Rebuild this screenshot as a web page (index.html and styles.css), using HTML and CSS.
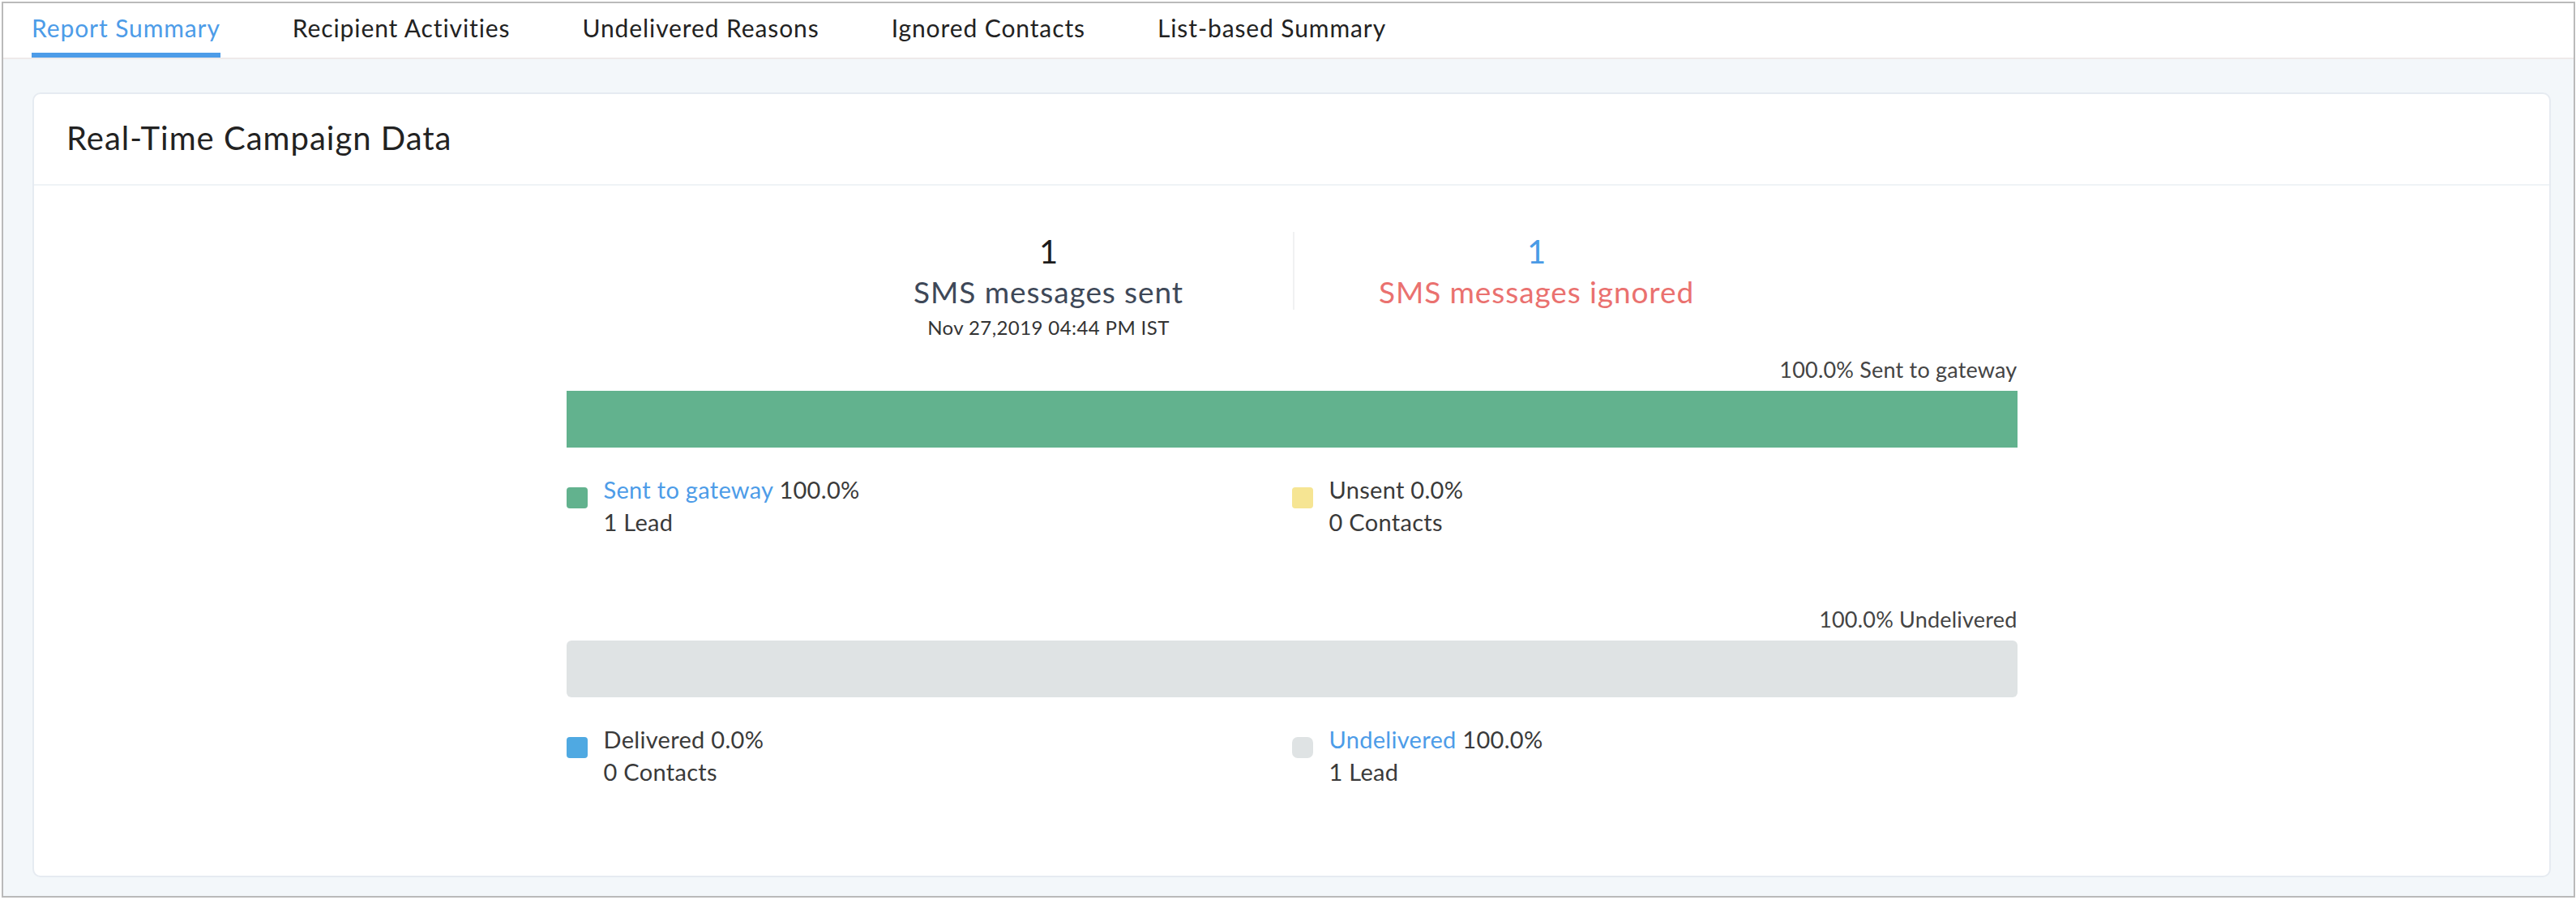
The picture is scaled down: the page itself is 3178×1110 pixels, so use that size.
FILE: index.html
```html
<!DOCTYPE html>
<html lang="en">
<head>
<meta charset="utf-8">
<title>Report Summary</title>
<link rel="stylesheet" href="styles.css">
</head>
<body>
<div class="frame">
  <nav class="tabs">
    <div class="tab active">Report Summary</div>
    <div class="tab">Recipient Activities</div>
    <div class="tab">Undelivered Reasons</div>
    <div class="tab">Ignored Contacts</div>
    <div class="tab">List-based Summary</div>
  </nav>
  <main class="content">
    <section class="card">
      <header class="card-head">
        <h2 class="card-title">Real-Time Campaign Data</h2>
      </header>
      <div class="card-body">
        <div class="stats">
          <div class="stat">
            <div class="stat-num">1</div>
            <div class="stat-label">SMS messages sent</div>
            <div class="stat-date">Nov 27,2019 04:44 PM IST</div>
          </div>
          <div class="stat stat-ignored">
            <div class="stat-num">1</div>
            <div class="stat-label">SMS messages ignored</div>
          </div>
        </div>

        <div class="meter">
          <div class="meter-caption">100.0% Sent to gateway</div>
          <div class="meter-track">
            <div class="meter-fill fill-green" style="width:100%"></div>
          </div>
          <div class="legend">
            <div class="legend-item">
              <span class="swatch sw-green"></span>
              <div class="legend-text">
                <div><span class="link">Sent to gateway</span> 100.0%</div>
                <div>1 Lead</div>
              </div>
            </div>
            <div class="legend-item">
              <span class="swatch sw-yellow"></span>
              <div class="legend-text">
                <div>Unsent 0.0%</div>
                <div>0 Contacts</div>
              </div>
            </div>
          </div>
        </div>

        <div class="meter">
          <div class="meter-caption">100.0% Undelivered</div>
          <div class="meter-track track-round">
            <div class="meter-fill fill-gray" style="width:100%"></div>
          </div>
          <div class="legend">
            <div class="legend-item">
              <span class="swatch sw-blue"></span>
              <div class="legend-text">
                <div>Delivered 0.0%</div>
                <div>0 Contacts</div>
              </div>
            </div>
            <div class="legend-item">
              <span class="swatch sw-gray"></span>
              <div class="legend-text">
                <div><span class="link">Undelivered</span> 100.0%</div>
                <div>1 Lead</div>
              </div>
            </div>
          </div>
        </div>
      </div>
    </section>
  </main>
</div>
</body>
</html>
```
FILE: styles.css
```css
html, body {
  margin: 0;
  padding: 0;
  background: #ffffff;
}

body {
  font-family: "Lato", "Liberation Sans", sans-serif;
  color: #222222;
}

.frame {
  margin: 2px 1px 3px 2px;
  height: 1105px;
  box-sizing: border-box;
  border: 2px solid #bababa;
  display: flex;
  flex-direction: column;
}

/* Tabs */
.tabs {
  display: flex;
  gap: 89px;
  padding-left: 35px;
  background: #ffffff;
  border-bottom: 2px solid #eeeaea;
}

.tab {
  font-size: 30px;
  line-height: 34px;
  letter-spacing: 0.9px;
  padding: 13px 0 14px;
  border-bottom: 6px solid transparent;
  color: #222222;
  white-space: nowrap;
}

.tab.active {
  color: #4d9ce8;
  border-bottom-color: #4d9ce8;
}

/* Content */
.content {
  flex: 1;
  background: #f3f7fa;
  padding: 41px 28px 23px 36px;
  display: flex;
  flex-direction: column;
}

.card {
  flex: 1;
  background: #ffffff;
  border: 2px solid #e6ebf1;
  border-radius: 10px;
  display: flex;
  flex-direction: column;
}

.card-head {
  padding: 30px 40px 33px;
  border-bottom: 2px solid #eff3f6;
}

.card-title {
  margin: 0;
  font-weight: 400;
  font-size: 40px;
  line-height: 48px;
  letter-spacing: 1px;
  color: #222222;
}

.card-body {
  display: flex;
  flex-direction: column;
  align-items: center;
  padding-top: 57px;
}

/* Stats */
.stats {
  display: flex;
  align-items: flex-start;
}

.stat {
  width: 602px;
  text-align: center;
}

.stat-ignored {
  width: 598px;
  border-left: 2px solid #f0f1f2;
}

.stat-num {
  font-size: 40px;
  line-height: 48px;
  color: #1d1d1d;
}

.stat-ignored .stat-num {
  color: #4a9be6;
}

.stat-label {
  margin-top: 4px;
  font-size: 37px;
  line-height: 44px;
  letter-spacing: 0.9px;
  color: #3e4858;
}

.stat-ignored .stat-label {
  color: #ea716f;
}

.stat-date {
  margin-top: 7px;
  font-size: 24px;
  line-height: 30px;
  letter-spacing: 0.4px;
  color: #333333;
}

/* Meters */
.meter {
  width: 1790px;
  margin-top: 21px;
}

.meter + .meter {
  margin-top: 84px;
}

.meter-caption {
  text-align: right;
  font-size: 27px;
  line-height: 32px;
  letter-spacing: 0.2px;
  color: #444444;
}

.meter-track {
  margin-top: 10px;
  height: 70px;
  background: #dfe3e4;
  overflow: hidden;
}

.track-round {
  border-radius: 6px;
}

.meter-fill {
  height: 100%;
}

.fill-green {
  background: #62b28e;
}

.fill-gray {
  background: #dfe3e4;
}

.legend {
  display: grid;
  grid-template-columns: 1fr 1fr;
  margin-top: 32px;
}

.legend-item {
  display: flex;
  align-items: flex-start;
  gap: 20px;
}

.swatch {
  flex: none;
  width: 26px;
  height: 26px;
  margin-top: 17px;
  border-radius: 4px;
}

.sw-green { background: #62b28e; }
.sw-yellow { background: #f6e593; }
.sw-blue { background: #4fa9e2; }
.sw-gray { background: #dfe3e4; border-radius: 7px; }

.legend-text {
  font-size: 29px;
  line-height: 40px;
  letter-spacing: 0.3px;
  color: #3a3a3a;
}

.link {
  color: #4d9ce8;
}
```
